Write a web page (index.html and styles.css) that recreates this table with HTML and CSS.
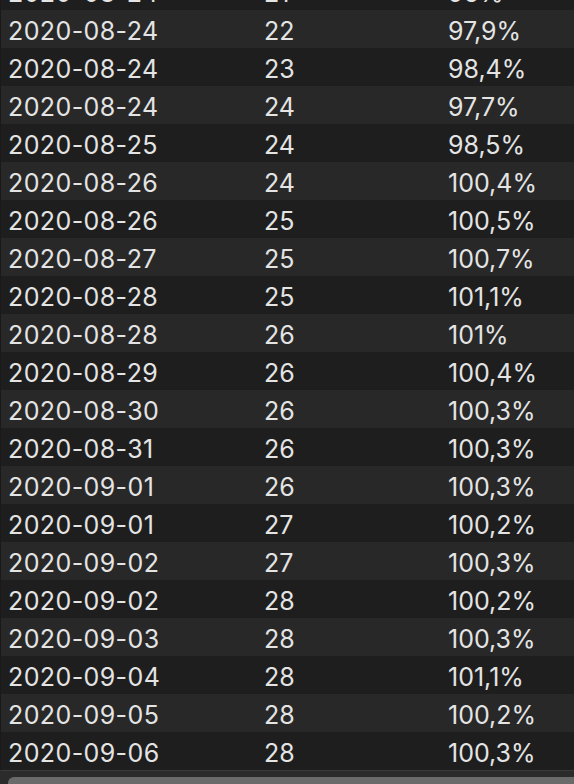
FILE: index.html
```html
<!DOCTYPE html>
<html>
<head>
<meta charset="utf-8">
<link rel="stylesheet" href="styles.css">
</head>
<body>
<div class="viewport">
  <div class="table">
    <div class="row"><span class="c1">2020-08-24</span><span class="c2">21</span><span class="c3">96%</span></div>
    <div class="row"><span class="c1">2020-08-24</span><span class="c2">22</span><span class="c3">97,9%</span></div>
    <div class="row"><span class="c1">2020-08-24</span><span class="c2">23</span><span class="c3">98,4%</span></div>
    <div class="row"><span class="c1">2020-08-24</span><span class="c2">24</span><span class="c3">97,7%</span></div>
    <div class="row"><span class="c1">2020-08-25</span><span class="c2">24</span><span class="c3">98,5%</span></div>
    <div class="row"><span class="c1">2020-08-26</span><span class="c2">24</span><span class="c3">100,4%</span></div>
    <div class="row"><span class="c1">2020-08-26</span><span class="c2">25</span><span class="c3">100,5%</span></div>
    <div class="row"><span class="c1">2020-08-27</span><span class="c2">25</span><span class="c3">100,7%</span></div>
    <div class="row"><span class="c1">2020-08-28</span><span class="c2">25</span><span class="c3">101,1%</span></div>
    <div class="row"><span class="c1">2020-08-28</span><span class="c2">26</span><span class="c3">101%</span></div>
    <div class="row"><span class="c1">2020-08-29</span><span class="c2">26</span><span class="c3">100,4%</span></div>
    <div class="row"><span class="c1">2020-08-30</span><span class="c2">26</span><span class="c3">100,3%</span></div>
    <div class="row"><span class="c1">2020-08-31</span><span class="c2">26</span><span class="c3">100,3%</span></div>
    <div class="row"><span class="c1">2020-09-01</span><span class="c2">26</span><span class="c3">100,3%</span></div>
    <div class="row"><span class="c1">2020-09-01</span><span class="c2">27</span><span class="c3">100,2%</span></div>
    <div class="row"><span class="c1">2020-09-02</span><span class="c2">27</span><span class="c3">100,3%</span></div>
    <div class="row"><span class="c1">2020-09-02</span><span class="c2">28</span><span class="c3">100,2%</span></div>
    <div class="row"><span class="c1">2020-09-03</span><span class="c2">28</span><span class="c3">100,3%</span></div>
    <div class="row"><span class="c1">2020-09-04</span><span class="c2">28</span><span class="c3">101,1%</span></div>
    <div class="row"><span class="c1">2020-09-05</span><span class="c2">28</span><span class="c3">100,2%</span></div>
    <div class="row"><span class="c1">2020-09-06</span><span class="c2">28</span><span class="c3">100,3%</span></div>
  </div>
</div>
<div class="scrollbar"><div class="thumb"></div></div>
</body>
</html>
```
FILE: styles.css
```css
html, body {
  margin: 0;
  padding: 0;
  background: #1e1e1e;
  overflow: hidden;
}
body {
  width: 574px;
  height: 784px;
  font-family: Inter, "Noto Sans", sans-serif;
  color: #e4e4e4;
}
.viewport {
  height: 770px;
  overflow: hidden;
  border-left: 1px solid #191919;
}
.table {
  margin-top: -28px;
}
.row {
  height: 38px;
  box-sizing: border-box;
  padding-top: 3px;
  display: flex;
  align-items: center;
  font-size: 25px;
  background: #1e1e1e;
}
.row:nth-child(even) {
  background: #282828;
}
.c1 {
  width: 256px;
  padding-left: 7px;
  letter-spacing: 0.4px;
}
.c2 {
  width: 184px;
}
.c3 {
  flex: 1;
}
.scrollbar {
  border-top: 1px solid #3a3a3a;
  background: #2b2b2b;
  padding: 6px 0 0 8px;
  box-sizing: border-box;
  height: 14px;
}
.thumb {
  height: 12px;
  background: #6a6a6a;
  border-radius: 6px 0 0 0;
}
```
